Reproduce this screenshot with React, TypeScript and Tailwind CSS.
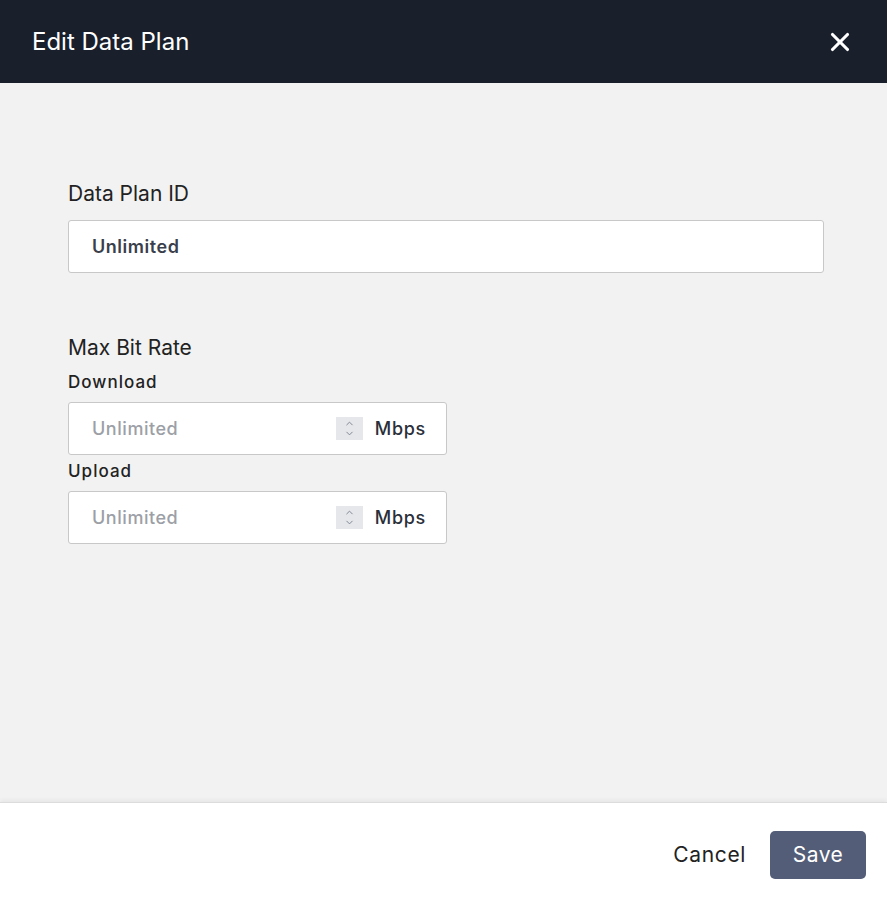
import React from "react";
import { X, ChevronUp, ChevronDown } from "lucide-react";

const font = { fontFamily: "Inter, 'Noto Sans', sans-serif" };

const RateField = ({ label }: { label: string }) => (
  <div className="flex flex-col">
    <label className="text-[17px] font-medium tracking-[0.06em] text-[#222] leading-[24px] mb-[8px]">{label}</label>
    <div className="flex h-[53px] w-[379px] items-center rounded-[3px] border border-[#c8c8c8] bg-white pl-[23px] pr-[20px]">
      <span className="flex-1 text-[18px] font-medium tracking-[0.03em] text-[#9ca0a6]">Unlimited</span>
      <div className="mr-[12px] flex h-[23px] w-[27px] flex-col items-center justify-center bg-[#e6e7ea] text-[#7b8090]">
        <ChevronUp className="h-[11px] w-[11px] -mb-[1px]" strokeWidth={2} />
        <ChevronDown className="h-[11px] w-[11px]" strokeWidth={2} />
      </div>
      <span className="text-[18px] font-medium tracking-[0.04em] text-[#2a2f3a]">Mbps</span>
    </div>
  </div>
);

export default function App() {
  return (
    <div className="flex h-[907px] w-full flex-col bg-[#f2f2f2]" style={font}>
      <header className="flex h-[83px] shrink-0 items-center justify-between bg-[#1a1f2c] pl-[32px] pr-[32px]">
        <h1 className="text-[24px] text-white">Edit Data Plan</h1>
        <X className="h-[30px] w-[30px] text-white" strokeWidth={2.5} />
      </header>
      <main className="flex-1 px-[68px] pt-[97px]">
        <div className="text-[21px] text-[#222] leading-[28px] mb-[12px]">Data Plan ID</div>
        <div className="flex h-[53px] w-[756px] items-center rounded-[3px] border border-[#c8c8c8] bg-white px-[23px] text-[18px] font-semibold tracking-[0.03em] text-[#3a3f4b]">
          Unlimited
        </div>
        <div className="mt-[61px] text-[21px] text-[#222] leading-[28px] mb-[8px]">Max Bit Rate</div>
        <div className="flex flex-col gap-[4px]">
          <RateField label="Download" />
          <RateField label="Upload" />
        </div>
      </main>
      <footer className="flex h-[105px] shrink-0 items-center justify-end gap-[24px] border-t border-[#dcdcdc] bg-white pr-[21px] shadow-[0_-2px_4px_rgba(0,0,0,0.05)]">
        <button className="text-[21px] tracking-[0.03em] text-[#222]">Cancel</button>
        <button className="h-[48px] w-[96px] rounded-[5px] bg-[#535d78] text-[21px] tracking-[0.02em] text-white">Save</button>
      </footer>
    </div>
  );
}
